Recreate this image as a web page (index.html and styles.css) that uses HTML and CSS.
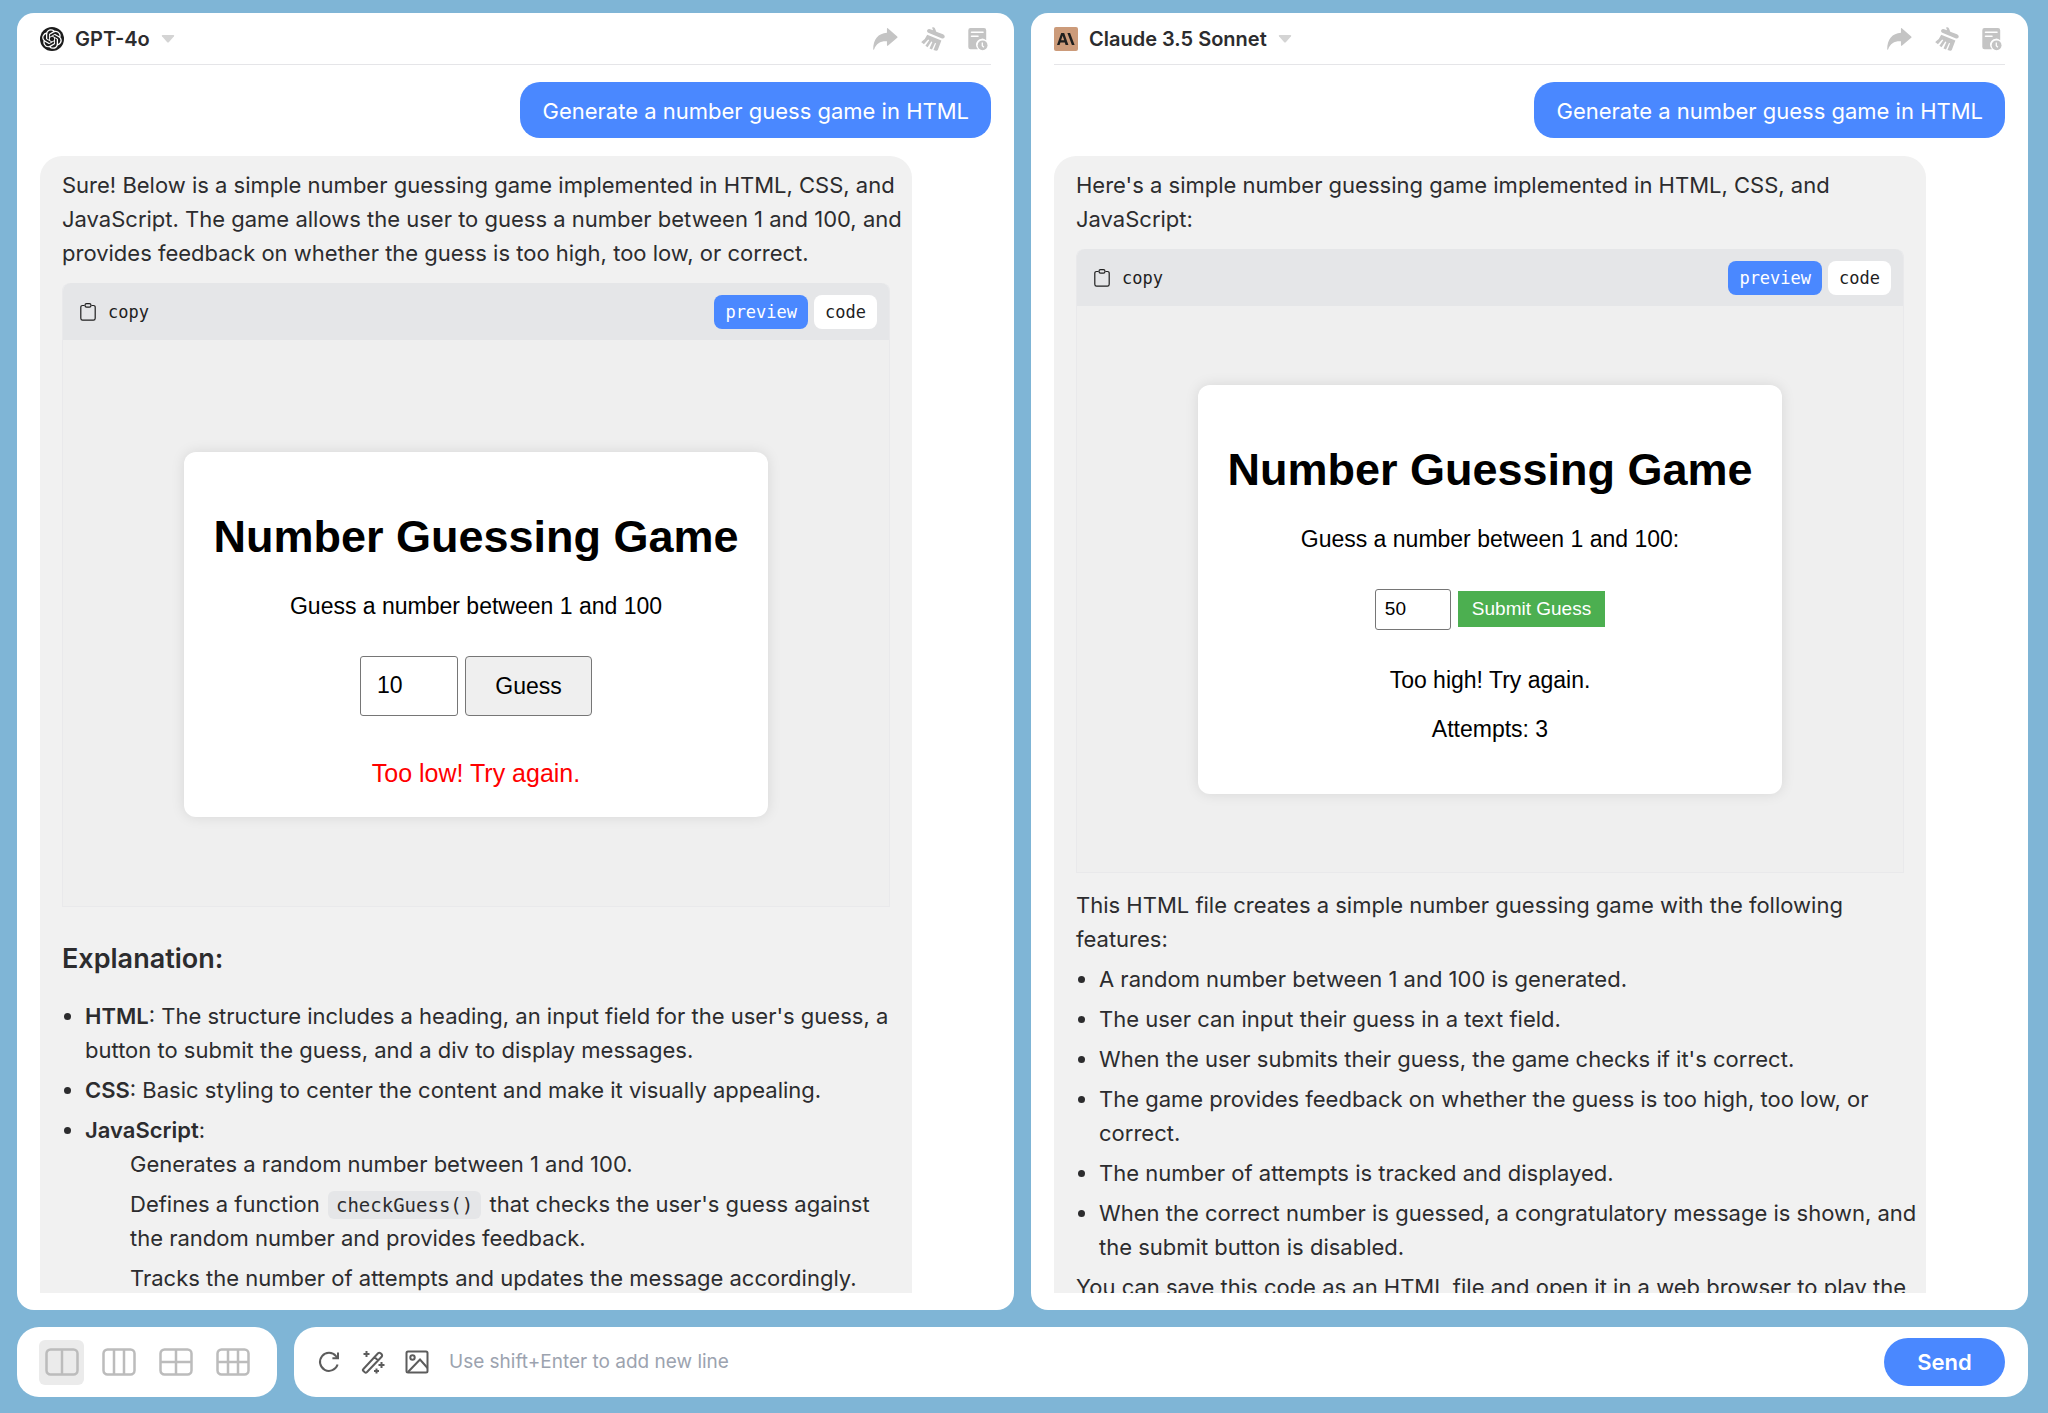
FILE: index.html
```html
<!DOCTYPE html>
<html lang="en">
<head>
<meta charset="utf-8">
<title>Chat comparison</title>
<link rel="stylesheet" href="styles.css">
</head>
<body>
<svg class="sprite" aria-hidden="true">
  <symbol id="i-caret" viewBox="0 0 14 8"><path d="M1.500 0h11q1.300.3.500 1.300L8 7q-1 1-2 0L1 1.300Q.2.300 1.500 0z" fill="currentColor"/></symbol>
  <symbol id="i-share" viewBox="0 0 26 24"><path d="M14.500 1.200q0-1 .9-.3l9.800 8.400q.8.700 0 1.400l-9.800 8.200q-.9.600-.9-.4v-4.100C8 14 3.500 16.500 1.200 22.600.9 23.400.2 23.400.2 22.400.2 12.500 5.500 5.800 14.500 5.400z" fill="currentColor"/></symbol>
  <symbol id="i-brush" viewBox="0 0 24 24"><g fill="currentColor"><path d="M11 .6q1.800-1 2.900.7l1.400 3.400 6.700 2.600q2.400 1.300 1.500 3.100-1 1.600-3.100.8L7.300 5.800Q5.500 4.700 6.300 3q1-1.500 3-.8l2.800 1z"/><path d="M6.200 7.700 20.400 13.600 16.800 23q-.6 1-1.700.8l-2.600-.7 2.600-6.800-1.100-.4-3 6.600-2.500-1.100 2.900-6.400-1.100-.5-3.700 5.700-2.200-1.400 3.800-5.500-1-.7-4.300 4.600-2.100-1.600Q-.2 15.400.8 14.500 4.500 12 6.200 7.700z"/></g></symbol>
  <symbol id="i-history" viewBox="0 0 20 24"><path d="M2.500 1h13.500q2.200 0 2.200 2.200v10a6 6 0 0 0-8.200 9.100H2.500Q.3 22.300.3 20V3.200Q.3 1 2.500 1z" fill="currentColor"/><path d="M3.500 5.200h11.500M3.500 9.200h6.500" stroke="#fff" stroke-width="1.600" stroke-linecap="round"/><circle cx="14.600" cy="18.300" r="4.900" fill="currentColor"/><path d="M14.300 15.500v3.200l1.600 1.600" stroke="#fff" stroke-width="1.300" fill="none"/></symbol>
  <symbol id="i-clip" viewBox="0 0 16 18"><g fill="none" stroke="currentColor" stroke-width="1.200"><path d="M4.500 2.500H2.600Q.8 2.500.8 4.300v11Q.8 17.200 2.600 17.200h10.800q1.800 0 1.800-1.900v-11q0-1.800-1.800-1.800h-1.900"/><rect x="5" y=".7" width="6" height="3.400" rx="1.600"/></g></symbol>
</svg>

<div class="app">
  <main class="panels">
    <section class="panel">
      <header class="panel-head">
        <button class="model" type="button">
          <svg class="logo" viewBox="0 0 24 24" aria-hidden="true"><circle cx="12" cy="12" r="12" fill="#1c1c1c"/><path transform="translate(2.160 2.160) scale(.82)" fill="#fff" d="M22.2819 9.8211a5.9847 5.9847 0 0 0-.5157-4.9108 6.0462 6.0462 0 0 0-6.5098-2.9A6.0651 6.0651 0 0 0 4.9807 4.1818a5.9847 5.9847 0 0 0-3.9977 2.9 6.0462 6.0462 0 0 0 .7427 7.0966 5.98 5.98 0 0 0 .511 4.9107 6.051 6.051 0 0 0 6.5146 2.9001A5.9847 5.9847 0 0 0 13.2599 24a6.0557 6.0557 0 0 0 5.7718-4.2058 5.9894 5.9894 0 0 0 3.9977-2.9001 6.0557 6.0557 0 0 0-.7475-7.0729zm-9.022 12.6081a4.4755 4.4755 0 0 1-2.8764-1.0408l.1419-.0804 4.7783-2.7582a.7948.7948 0 0 0 .3927-.6813v-6.7369l2.02 1.1686a.071.071 0 0 1 .038.052v5.5826a4.504 4.504 0 0 1-4.4945 4.4944zm-9.6607-4.1254a4.4708 4.4708 0 0 1-.5346-3.0137l.142.0852 4.783 2.7582a.7712.7712 0 0 0 .7806 0l5.8428-3.3685v2.3324a.0804.0804 0 0 1-.0332.0615L9.74 19.9502a4.4992 4.4992 0 0 1-6.1408-1.6464zM2.3408 7.8956a4.485 4.485 0 0 1 2.3655-1.9728V11.6a.7664.7664 0 0 0 .3879.6765l5.8144 3.3543-2.0201 1.1685a.0757.0757 0 0 1-.071 0l-4.8303-2.7865A4.504 4.504 0 0 1 2.3408 7.872zm16.5963 3.8558L13.1038 8.364 15.1192 7.2a.0757.0757 0 0 1 .071 0l4.8303 2.7913a4.4944 4.4944 0 0 1-.6765 8.1042v-5.6772a.79.79 0 0 0-.407-.667zm2.0107-3.0231l-.142-.0852-4.7735-2.7818a.7759.7759 0 0 0-.7854 0L9.409 9.2297V6.8974a.0662.0662 0 0 1 .0284-.0615l4.8303-2.7866a4.4992 4.4992 0 0 1 6.6802 4.66zM8.3065 12.863l-2.02-1.1638a.0804.0804 0 0 1-.038-.0567V6.0742a4.4992 4.4992 0 0 1 7.3757-3.4537l-.142.0805L8.704 5.459a.7948.7948 0 0 0-.3927.6813zm1.0976-2.3654l2.602-1.4998 2.6069 1.4998v2.9994l-2.5974 1.4997-2.6067-1.4997Z"/></svg>
          <span>GPT-4o</span>
          <svg class="caret"><use href="#i-caret"/></svg>
        </button>
        <div class="tools">
          <button type="button" aria-label="Share"><svg width="25" height="24"><use href="#i-share"/></svg></button>
          <button type="button" aria-label="Clear"><svg width="24" height="24"><use href="#i-brush"/></svg></button>
          <button type="button" aria-label="History"><svg width="20" height="24"><use href="#i-history"/></svg></button>
        </div>
      </header>
      <div class="scroll">
        <p class="prompt">Generate a number guess game in HTML</p>
        <article class="answer">
          <p>Sure! Below is a simple number guessing game implemented in HTML, CSS, and JavaScript. The game allows the user to guess a number between 1 and 100, and provides feedback on whether the guess is too high, too low, or correct.</p>
          <div class="code-block">
            <div class="code-head">
              <button class="copy" type="button"><svg width="16" height="18"><use href="#i-clip"/></svg>copy</button>
              <button class="tab active" type="button">preview</button>
              <button class="tab" type="button">code</button>
            </div>
            <div class="preview low">
              <form class="game">
                <h1>Number Guessing Game</h1>
                <label for="guess-a">Guess a number between 1 and 100</label>
                <div class="guess-row"><input id="guess-a" class="guess-lg" type="text" inputmode="numeric" value="10"><button class="guess-btn" type="button">Guess</button></div>
                <p class="too-low">Too low! Try again.</p>
              </form>
            </div>
          </div>
          <h3>Explanation:</h3>
          <ul>
            <li><strong>HTML</strong>: The structure includes a heading, an input field for the user's guess, a button to submit the guess, and a div to display messages.</li>
            <li><strong>CSS</strong>: Basic styling to center the content and make it visually appealing.</li>
            <li><strong>JavaScript</strong>:
              <ul class="nested">
                <li>Generates a random number between 1 and 100.</li>
                <li>Defines a function <code>checkGuess()</code> that checks the user's guess against the random number and provides feedback.</li>
                <li>Tracks the number of attempts and updates the message accordingly.</li>
              </ul>
            </li>
          </ul>
        </article>
      </div>
    </section>

    <section class="panel">
      <header class="panel-head">
        <button class="model" type="button">
          <svg class="logo" viewBox="0 0 24 24" aria-hidden="true"><rect width="24" height="24" rx="2" fill="#cc9b7a"/><path d="M7.200 6h3l4.200 12h-2.800l-.8-2.500H6.400L5.600 18H3zM8.600 8.700 7.100 13.300h3.100zM13.400 6h2.700l4.500 12h-2.700z" fill="#1f1f1e" fill-rule="evenodd"/></svg>
          <span>Claude 3.5 Sonnet</span>
          <svg class="caret"><use href="#i-caret"/></svg>
        </button>
        <div class="tools">
          <button type="button" aria-label="Share"><svg width="25" height="24"><use href="#i-share"/></svg></button>
          <button type="button" aria-label="Clear"><svg width="24" height="24"><use href="#i-brush"/></svg></button>
          <button type="button" aria-label="History"><svg width="20" height="24"><use href="#i-history"/></svg></button>
        </div>
      </header>
      <div class="scroll">
        <p class="prompt">Generate a number guess game in HTML</p>
        <article class="answer">
          <p>Here's a simple number guessing game implemented in HTML, CSS, and JavaScript:</p>
          <div class="code-block">
            <div class="code-head">
              <button class="copy" type="button"><svg width="16" height="18"><use href="#i-clip"/></svg>copy</button>
              <button class="tab active" type="button">preview</button>
              <button class="tab" type="button">code</button>
            </div>
            <div class="preview">
              <form class="game">
                <h1>Number Guessing Game</h1>
                <label for="guess-b">Guess a number between 1 and 100:</label>
                <div class="guess-row"><input id="guess-b" class="guess-sm" type="text" inputmode="numeric" value="50"><button class="submit-btn" type="button">Submit Guess</button></div>
                <p class="result">Too high! Try again.</p>
                <p class="attempts">Attempts: 3</p>
              </form>
            </div>
          </div>
          <p>This HTML file creates a simple number guessing game with the following features:</p>
          <ul>
            <li>A random number between 1 and 100 is generated.</li>
            <li>The user can input their guess in a text field.</li>
            <li>When the user submits their guess, the game checks if it's correct.</li>
            <li>The game provides feedback on whether the guess is too high, too low, or correct.</li>
            <li>The number of attempts is tracked and displayed.</li>
            <li>When the correct number is guessed, a congratulatory message is shown, and the submit button is disabled.</li>
          </ul>
          <p>You can save this code as an HTML file and open it in a web browser to play the game.</p>
        </article>
      </div>
    </section>
  </main>

  <footer class="bottom">
    <nav class="layouts" aria-label="Layout">
      <button class="on" type="button" aria-label="Two columns"><svg viewBox="0 0 34 28"><rect x="1.500" y="1.500" width="31" height="25" rx="4"/><path d="M17 1.500v25"/></svg></button>
      <button type="button" aria-label="Three columns"><svg viewBox="0 0 34 28"><rect x="1.500" y="1.500" width="31" height="25" rx="4"/><path d="M12 1.500v25M22 1.500v25"/></svg></button>
      <button type="button" aria-label="Four tiles"><svg viewBox="0 0 34 28"><rect x="1.500" y="1.500" width="31" height="25" rx="4"/><path d="M17 1.500v25M1.500 14h31"/></svg></button>
      <button type="button" aria-label="Six tiles"><svg viewBox="0 0 34 28"><rect x="1.500" y="1.500" width="31" height="25" rx="4"/><path d="M12 1.500v25M22 1.500v25M1.500 14h31"/></svg></button>
    </nav>
    <form class="composer">
      <button class="act" type="button" aria-label="Regenerate"><svg viewBox="0 0 24 24"><path d="M20.600 14.500A9 9 0 1 1 19 6.200l2 2.100M21 2.500v5.800h-5.600"/></svg></button>
      <button class="act" type="button" aria-label="Prompts"><svg viewBox="0 0 24 24"><path d="M2.200 19.300 17 3.200q1.300-1 2.600 0l1 1q1 1.300 0 2.600L5.800 22.300q-1 .8-2 0l-1.600-1.500q-.7-.8 0-1.500zM13.500 7l3.800 3.700M5.500 1v6M2.500 4h6M20.500 12v6M17.500 15h6M15.500 18.500v5M13 21h5"/></svg></button>
      <button class="act" type="button" aria-label="Add image"><svg viewBox="0 0 24 24"><rect x="1.500" y="1.500" width="21" height="21" rx="1.500"/><circle cx="7.500" cy="7.500" r="2.200"/><path d="m3 22 12-12.500 7.500 8.500"/></svg></button>
      <input class="message" type="text" aria-label="Message" placeholder="Use shift+Enter to add new line">
      <button class="send" type="button">Send</button>
    </form>
  </footer>
</div>
</body>
</html>
```

FILE: styles.css
```css
*, *::before, *::after { box-sizing: border-box; }

body {
  margin: 0;
  background: #7fb5d6;
  color: #2c2c2e;
  font: 22px/34px Inter, "Noto Sans", sans-serif;
}

p, h1, h3, ul { margin: 0; padding: 0; }
button, input { font: inherit; color: inherit; }
button { border: 0; padding: 0; background: none; cursor: pointer; }
svg { display: block; }
.sprite { position: absolute; width: 0; height: 0; }

.app {
  display: flex;
  flex-direction: column;
  gap: 17px;
  height: 100vh;
  padding: 13px 20px 16px 17px;
}

/* Chat panels */
.panels {
  flex: 1;
  min-height: 0;
  display: grid;
  grid-template-columns: 1fr 1fr;
  gap: 17px;
}
.panel {
  display: flex;
  flex-direction: column;
  min-width: 0;
  min-height: 0;
  padding: 0 23px 17px;
  border-radius: 17px;
  background: #fff;
}
.panel-head {
  display: flex;
  align-items: center;
  justify-content: space-between;
  height: 52px;
  flex: none;
  border-bottom: 1px solid #e5e5e8;
}
.model { display: flex; align-items: center; gap: 11px; font-size: 20px; line-height: 24px; font-weight: 600; }
.logo { width: 24px; height: 24px; }
.caret { width: 14px; height: 8px; color: #d4d4d4; }
.tools { display: flex; align-items: center; gap: 23px; padding-right: 3px; color: #c4c4c4; }

.scroll {
  flex: 1;
  min-height: 0;
  overflow: hidden;
  display: flex;
  flex-direction: column;
  padding-top: 17px;
}
.prompt {
  flex: none;
  align-self: flex-end;
  padding: 12px 22px 10px;
  border-radius: 20px;
  background: #4a88ff;
  color: #fff;
}
.answer {
  flex: none;
  width: 872px;
  max-width: 100%;
  margin-top: 18px;
  padding: 12px 8px 12px 22px;
  border-radius: 22px;
  background: #f1f1f1;
}
.answer h3 { margin: 35px 0 23px; font-size: 27px; line-height: 34px; font-weight: 600; }
.answer ul { margin: 6px 0; padding-left: 23px; }
.answer li + li { margin-top: 6px; }
.answer .nested { margin: 0; padding-left: 45px; list-style: none; }
.answer strong { font-weight: 600; }
.answer code {
  margin: 0 2px;
  padding: 3px 8px;
  border-radius: 6px;
  background: #e5e6e8;
  font: 19px/22px "DejaVu Sans Mono", monospace;
}

/* Code block with live preview */
.code-block { margin: 13px 14px 15px 0; border: 1px solid #e9e9eb; border-top: 0; border-radius: 8px 8px 0 0; }
.code-head {
  display: flex;
  align-items: center;
  gap: 6px;
  height: 57px;
  padding: 0 12px 0 17px;
  border-radius: 8px 8px 0 0;
  background: #e5e6e8;
  color: #1f1f1f;
  font: 17px/34px "DejaVu Sans Mono", monospace;
}
.copy { display: flex; align-items: center; gap: 12px; margin-right: auto; }
.tab { height: 34px; padding: 0 11px; border-radius: 8px; background: #fff; }
.tab.active { background: #4a88ff; color: #fff; }
.preview {
  display: flex;
  align-items: center;
  justify-content: center;
  height: 566px;
  background: #efefef;
  color: #000;
  font: 23px/26px "Liberation Sans", Arial, sans-serif;
}
.preview.low { padding-top: 22px; }
.game {
  display: flex;
  flex-direction: column;
  align-items: center;
  width: 584px;
  padding: 28px;
  border-radius: 12px;
  background: #fff;
  box-shadow: 0 0 14px rgba(0, 0, 0, .1);
}
.game h1 { margin: 31px 0 30px; font-size: 45px; line-height: 52px; white-space: nowrap; }
.guess-row { display: flex; align-items: center; gap: 7px; margin-top: 37px; }
.guess-row input { border: 1px solid #767676; border-radius: 3px; background: #fff; }
.guess-lg { width: 98px; height: 60px; padding: 0 16px; }
.guess-btn { width: 127px; height: 60px; border: 1px solid #767676; border-radius: 4px; background: #efefef; }
.too-low { margin-top: 42px; padding-bottom: 1px; font-size: 25px; line-height: 30px; color: #f00; }
.guess-sm { width: 76px; height: 41px; padding: 0 9px; font-size: 19px; }
.submit-btn { height: 36px; padding: 0 14px; background: #4caf50; color: #fff; font-size: 19px; }
.result { margin-top: 37px; }
.attempts { margin: 23px 0 24px; }

/* Bottom bar */
.bottom { display: flex; gap: 17px; height: 70px; flex: none; }
.layouts, .composer { display: flex; align-items: center; border-radius: 22px; background: #fff; }
.layouts { gap: 12px; padding: 0 22px; }
.layouts button { display: grid; place-items: center; width: 45px; height: 45px; border-radius: 6px; }
.layouts .on { background: #ebebeb; }
.layouts svg { width: 34px; height: 28px; fill: none; stroke: #bcbcbc; stroke-width: 2.5; }
.composer { flex: 1; gap: 20px; padding: 0 23px; }
.act svg { width: 24px; height: 24px; fill: none; stroke: #5c5c5c; stroke-width: 2; }
.message { flex: 1; min-width: 0; border: 0; padding: 0; background: none; outline: 0; font-size: 19px; }
.message::placeholder { color: #9ca3af; opacity: 1; }
.send { width: 121px; height: 48px; border-radius: 24px; background: #4a88ff; color: #fff; font-weight: 600; }
```
